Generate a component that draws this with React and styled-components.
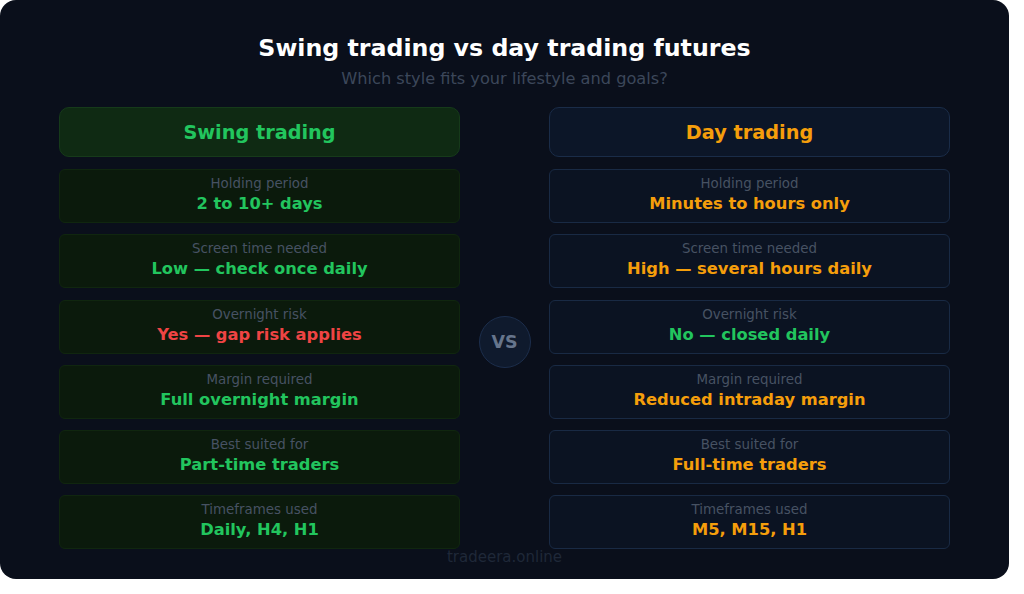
import React from "react"
import styled, { createGlobalStyle } from "styled-components"

const GlobalStyle = createGlobalStyle`
  body {
    margin: 0;
    background: #ffffff;
    font-family: "DejaVu Sans", "Liberation Sans", sans-serif;
  }
`

const themes = {
  swing: {
    headBg: "#0f2a13",
    headBorder: "#163a1a",
    rowBg: "#0b1a0c",
    rowBorder: "#10260f",
    accent: "#22c55e",
  },
  day: {
    headBg: "#0c1628",
    headBorder: "#1a2c48",
    rowBg: "#0b1322",
    rowBorder: "#192a44",
    accent: "#f59e0b",
  },
}

const Panel = styled.div`
  width: 1009px;
  height: 579px;
  box-sizing: border-box;
  background: #0a0f1b;
  border-radius: 16px;
  padding: 33px 59px 0;
  display: flex;
  flex-direction: column;
  align-items: center;
`

const Title = styled.h1`
  margin: 0;
  font-size: 23.7px;
  line-height: 30px;
  font-weight: bold;
  color: #ffffff;
`

const Subtitle = styled.p`
  margin: 6px 0 18px;
  font-size: 16.2px;
  line-height: 20px;
  color: #3c475a;
`

const Board = styled.div`
  display: grid;
  grid-template-columns: 401px 89px 401px;
  width: 100%;
`

const Column = styled.div`
  display: flex;
  flex-direction: column;
  gap: 11.3px;
`

const Header = styled.div`
  height: 50px;
  box-sizing: border-box;
  margin-bottom: 0.7px;
  border-radius: 10px;
  background: ${(p) => themes[p.$kind].headBg};
  border: 1px solid ${(p) => themes[p.$kind].headBorder};
  color: ${(p) => themes[p.$kind].accent};
  display: flex;
  align-items: center;
  justify-content: center;
  font-size: 19.3px;
  font-weight: bold;
`

const Row = styled.div`
  height: 54px;
  box-sizing: border-box;
  padding-top: 6px;
  border-radius: 6px;
  background: ${(p) => themes[p.$kind].rowBg};
  border: 1px solid ${(p) => themes[p.$kind].rowBorder};
  display: flex;
  flex-direction: column;
  align-items: center;
`

const Label = styled.span`
  font-size: 13.4px;
  line-height: 16px;
  color: #475263;
`

const Value = styled.span`
  margin-top: 2px;
  font-size: 16.3px;
  line-height: 20px;
  font-weight: bold;
  color: ${(p) => p.$color};
`

const Middle = styled.div`
  display: flex;
  justify-content: center;
  padding-top: 209px;
`

const VsBadge = styled.div`
  width: 52px;
  height: 52px;
  box-sizing: border-box;
  border-radius: 50%;
  background: #0f1a2d;
  border: 1px solid #1c2e4c;
  color: #66758c;
  font-size: 17.5px;
  font-weight: bold;
  display: flex;
  align-items: center;
  justify-content: center;
`

const Footer = styled.div`
  margin-top: 0;
  font-size: 15px;
  line-height: 16px;
  color: #1f2838;
`

const RED = "#ef4444"

const swingRows = [
  ["Holding period", "2 to 10+ days"],
  ["Screen time needed", "Low — check once daily"],
  ["Overnight risk", "Yes — gap risk applies", RED],
  ["Margin required", "Full overnight margin"],
  ["Best suited for", "Part-time traders"],
  ["Timeframes used", "Daily, H4, H1"],
]

const dayRows = [
  ["Holding period", "Minutes to hours only"],
  ["Screen time needed", "High — several hours daily"],
  ["Overnight risk", "No — closed daily", themes.swing.accent],
  ["Margin required", "Reduced intraday margin"],
  ["Best suited for", "Full-time traders"],
  ["Timeframes used", "M5, M15, H1"],
]

const StyleColumn = ({ kind, title, rows }) => (
  <Column>
    <Header $kind={kind}>{title}</Header>
    {rows.map(([label, value, color]) => (
      <Row key={label} $kind={kind}>
        <Label>{label}</Label>
        <Value $color={color || themes[kind].accent}>{value}</Value>
      </Row>
    ))}
  </Column>
)

export default function App() {
  return (
    <>
      <GlobalStyle />
      <Panel>
        <Title>Swing trading vs day trading futures</Title>
        <Subtitle>Which style fits your lifestyle and goals?</Subtitle>
        <Board>
          <StyleColumn kind="swing" title="Swing trading" rows={swingRows} />
          <Middle>
            <VsBadge>VS</VsBadge>
          </Middle>
          <StyleColumn kind="day" title="Day trading" rows={dayRows} />
        </Board>
        <Footer>tradeera.online</Footer>
      </Panel>
    </>
  )
}
